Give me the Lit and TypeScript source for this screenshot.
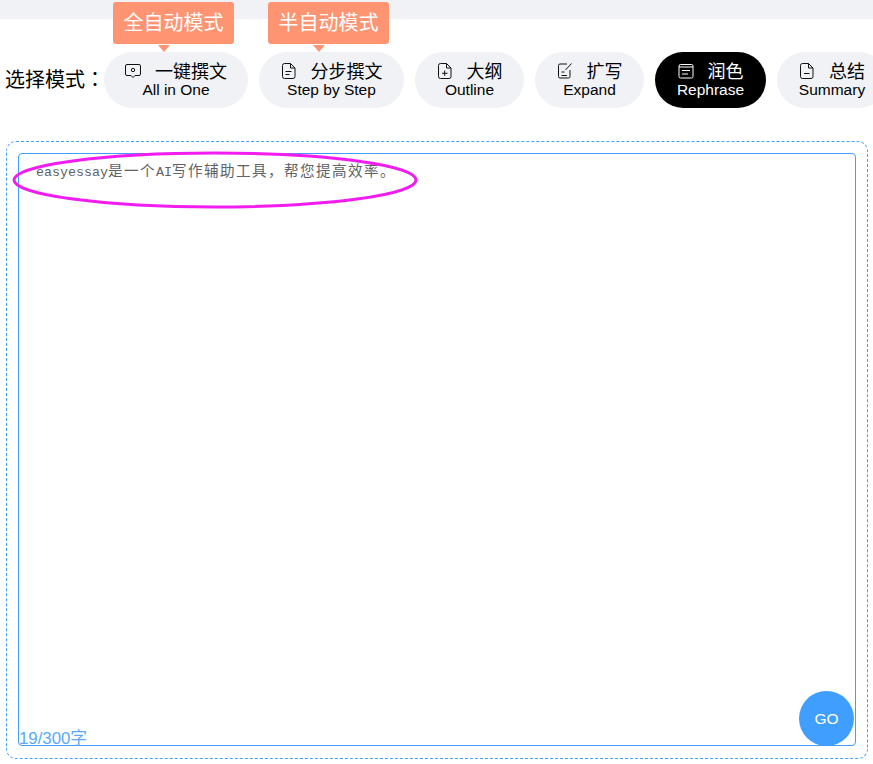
import { LitElement, html, css, svg } from "lit";
import { customElement } from "lit/decorators.js";

const docBody = svg`<path d="M3.500 .5h6l4.500 4.500v8.500a2 2 0 0 1-2 2H3.500a2 2 0 0 1-2-2V2.500a2 2 0 0 1 2-2z"/>`;
const icons: Record<string, any> = {
  chat: svg`<path d="M2 1.500h12a1.500 1.500 0 0 1 1.500 1.500v8a1.500 1.500 0 0 1-1.500 1.500h-4l-2 2-2-2H2a1.500 1.500 0 0 1-1.500-1.500V3A1.500 1.500 0 0 1 2 1.500z"/><circle cx="8" cy="7" r="1.700"/>`,
  doc: svg`${docBody}<path d="M9.500 .5v4.500h4.500M4.500 8.500h6M4.500 11.500h4"/>`,
  plus: svg`${docBody}<path d="M9.500 .5v4.500h4.500M7.700 7.500v5.500M5 10.300h5.500"/>`,
  edit: svg`<path d="M10 1H3A1.500 1.500 0 0 0 1.500 2.500v11A1.500 1.500 0 0 0 3 15h8.500A1.500 1.500 0 0 0 13 13.500V7M14.500 .5 8.500 7M4.500 9h3M4.500 12.500h5.500"/>`,
  cal: svg`<rect x="1" y="1.500" width="14" height="13.500" rx="1.500"/><path d="M1 4h14M4 7.500h8M4 11h6"/>`,
  minus: svg`${docBody}<path d="M9.500 .5v4.500h4.500M5 10.500h5.500"/>`,
};

const modes = [
  { zh: "一键撰文", en: "All in One", icon: "chat", w: 144, tip: "全自动模式" },
  { zh: "分步撰文", en: "Step by Step", icon: "doc", w: 145, tip: "半自动模式" },
  { zh: "大纲", en: "Outline", icon: "plus", w: 109 },
  { zh: "扩写", en: "Expand", icon: "edit", w: 109 },
  { zh: "润色", en: "Rephrase", icon: "cal", w: 111, active: true },
  { zh: "总结", en: "Summary", icon: "minus", w: 110 },
];

@customElement("app-root")
export class AppRoot extends LitElement {
  static styles = css`
    :host {
      display: block;
      width: 873px;
      height: 764px;
      overflow: hidden;
      background: #fff;
      font-family: "Liberation Sans", "Noto Sans CJK SC", sans-serif;
      color: #000;
    }
    .top { height: 19px; background: #f0f2f6; }
    .row {
      display: flex;
      align-items: center;
      margin-top: 33px;
      padding-left: 5px;
      gap: 11px;
      width: 1000px;
    }
    .label { font-size: 20px; width: 88px; white-space: nowrap; flex: none; padding-bottom: 4px; }
    .colon { font-family: "Noto Sans CJK TC", sans-serif; }
    .pill {
      position: relative;
      flex: none;
      height: 56px;
      border-radius: 28px;
      background: #f0f2f6;
      display: flex;
      flex-direction: column;
      align-items: center;
      justify-content: center;
    }
    .pill.active { background: #000; color: #fff; }
    .zh { display: flex; align-items: center; gap: 14px; font-size: 18px; line-height: 20px; height: 20px; white-space: nowrap; }
    .zh svg { width: 16px; height: 16px; margin-top: -2px; fill: none; stroke: currentColor; stroke-width: 1; flex: none; color: #111; }
    .active .zh svg { color: #fff; }
    .en { font-size: 15.5px; line-height: 16px; white-space: nowrap; }
    .tip {
      position: absolute;
      left: 9px;
      top: -50px;
      width: 121px;
      height: 42px;
      background: #ff9473;
      border-radius: 3px;
      color: #fff;
      font-size: 20px;
      line-height: 42px;
      text-align: center;
    }
    .tip::after {
      content: "";
      position: absolute;
      left: 45px;
      top: 43px;
      border-left: 6px solid transparent;
      border-right: 6px solid transparent;
      border-top: 7px solid #ff9473;
    }
    .outer {
      box-sizing: border-box;
      width: 862px;
      height: 618px;
      margin: 33px 0 0 6px;
      padding: 11px;
      border: 1px dashed #409eff;
      border-radius: 10px;
    }
    .inner {
      position: relative;
      box-sizing: border-box;
      height: 593px;
      border: 1px solid #409eff;
      border-radius: 4px;
      padding: 7px 17px;
      color: #606266;
      line-height: 18px;
      white-space: nowrap;
    }
    .lat { font-family: "Liberation Mono", monospace; font-size: 13.33px; }
    .cjk { font-family: "Noto Sans CJK SC", sans-serif; font-size: 14.6px; letter-spacing: 1.4px; }
    .ring { position: absolute; left: -7px; top: -3px; overflow: visible; pointer-events: none; }
    .count { position: absolute; left: 0; bottom: -3px; font-size: 16.8px; line-height: 18px; color: #5aa9fa; }
    .go {
      position: absolute;
      right: 1px;
      bottom: -1px;
      width: 55px;
      height: 55px;
      border-radius: 50%;
      background: #409eff;
      color: #fff;
      font-size: 15.5px;
      display: flex;
      align-items: center;
      justify-content: center;
    }
  `;

  render() {
    return html`
      <div class="top"></div>
      <div class="row">
        <div class="label">选择模式<span class="colon">：</span></div>
        ${modes.map(
          (m) => html`
            <div class="pill ${m.active ? "active" : ""}" style="width:${m.w}px">
              ${m.tip ? html`<div class="tip">${m.tip}</div>` : ""}
              <div class="zh"><svg viewBox="0 0 16 16">${icons[m.icon]}</svg><span>${m.zh}</span></div>
              <div class="en">${m.en}</div>
            </div>
          `
        )}
      </div>
      <div class="outer">
        <div class="inner">
          <span class="lat">easyessay</span><span class="cjk">是一个</span><span class="lat">AI</span><span class="cjk">写作辅助工具，帮您提高效率。</span>
          <svg class="ring" width="406" height="60" viewBox="0 0 406 60">
            <ellipse cx="203" cy="29" rx="201" ry="27" fill="none" stroke="#f01cf0" stroke-width="3"></ellipse>
          </svg>
          <div class="count">19/300字</div>
          <div class="go">GO</div>
        </div>
      </div>
    `;
  }
}
